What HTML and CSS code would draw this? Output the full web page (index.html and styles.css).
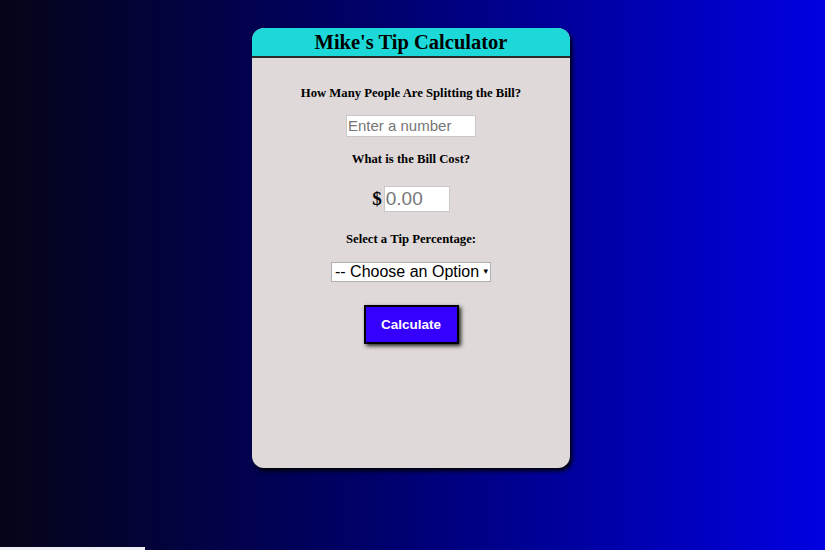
FILE: index.html
```html
<!DOCTYPE html>
<html>
<head>
<meta charset="utf-8">
<title>Mike's Tip Calculator</title>
<link rel="stylesheet" href="styles.css">
</head>
<body>
<div class="card">
  <div class="card-header"><h1 class="title">Mike's Tip Calculator</h1></div>
  <div class="card-body">
    <p class="label label-first">How Many People Are Splitting the Bill?</p>
    <input class="field field-people" type="text" placeholder="Enter a number">
    <p class="label label-bill">What is the Bill Cost?</p>
    <div class="bill-row"><span class="dollar">$</span><input class="field field-bill" type="text" placeholder="0.00"></div>
    <p class="label label-tip">Select a Tip Percentage:</p>
    <span class="select-wrap">
      <select class="tip-select">
        <option>-- Choose an Option --</option>
        <option>10%</option>
        <option>15%</option>
        <option>20%</option>
      </select>
    </span>
    <button class="calc-btn">Calculate</button>
  </div>
</div>
<div class="bottom-strip"></div>
</body>
</html>
```
FILE: styles.css
```css
html, body {
  margin: 0;
  padding: 0;
  height: 100%;
}
body {
  background: linear-gradient(to right, #050518 0%, #00006a 45%, #0000e2 100%);
  font-family: "Liberation Serif", "Times New Roman", serif;
  padding-top: 28px;
  box-sizing: border-box;
  overflow: hidden;
}
.card {
  width: 318px;
  height: 440px;
  margin-left: calc(50% - 160.5px);
  background: #dfd9d9;
  border-radius: 12px;
  box-shadow: 2px 3px 4px rgba(0,0,0,0.95);
  overflow: hidden;
  display: flex;
  flex-direction: column;
}
.card-header {
  background: #1cd8d8;
  height: 28px;
  border-bottom: 2px solid #2a2a2a;
  display: flex;
  align-items: center;
  justify-content: center;
}
.title {
  margin: 0;
  font-size: 20.5px;
  font-weight: bold;
  color: #000;
  line-height: 26px;
}
.card-body {
  display: flex;
  flex-direction: column;
  align-items: center;
  padding-top: 28px;
}
.label {
  margin: 0;
  font-size: 12.7px;
  font-weight: bold;
  line-height: 15px;
  color: #000;
}
.field {
  font-family: "Liberation Sans", Arial, sans-serif;
  border: 1px solid #c8c8c8;
  background: #fff;
  box-sizing: border-box;
  padding: 0 1px;
  margin: 0;
  outline: none;
}
.field::placeholder {
  color: #767676;
}
.field-people {
  width: 130px;
  height: 22px;
  font-size: 15px;
  margin-top: 14px;
  padding-bottom: 1px;
}
.label-bill {
  margin-top: 15px;
}
.bill-row {
  margin-top: 19px;
  display: flex;
  align-items: center;
  gap: 2px;
}
.dollar {
  font-size: 19px;
  font-weight: bold;
  line-height: 26px;
}
.field-bill {
  width: 66px;
  height: 26px;
  font-size: 19px;
}
.label-tip {
  margin-top: 20px;
}
.select-wrap {
  position: relative;
  display: block;
  margin-top: 15px;
  width: 160px;
  height: 20px;
}
.tip-select {
  -webkit-appearance: none;
  appearance: none;
  display: block;
  width: 160px;
  height: 20px;
  box-sizing: border-box;
  font-family: "Liberation Sans", Arial, sans-serif;
  font-size: 16px;
  line-height: 18px;
  border: 1px solid #b0b0b0;
  background: #fff;
  color: #000;
  padding: 0 9px 0 3px;
  border-radius: 0;
  outline: none;
}
.select-wrap::after {
  content: "\25BE";
  position: absolute;
  right: 3px;
  top: 3px;
  font-family: "DejaVu Sans", sans-serif;
  font-size: 9px;
  line-height: 12px;
  color: #000;
  pointer-events: none;
}
.calc-btn {
  margin-top: 23px;
  width: 95px;
  height: 39px;
  background: #3600ff;
  border: 2px solid #000;
  box-shadow: 2px 2px 4px rgba(0,0,0,0.85);
  color: #fff;
  font-family: "Liberation Sans", Arial, sans-serif;
  font-weight: bold;
  font-size: 13.5px;
  cursor: pointer;
}
.bottom-strip {
  position: fixed;
  left: 0;
  bottom: 0;
  width: 145px;
  height: 3px;
  background: #eef0f6;
}
```
